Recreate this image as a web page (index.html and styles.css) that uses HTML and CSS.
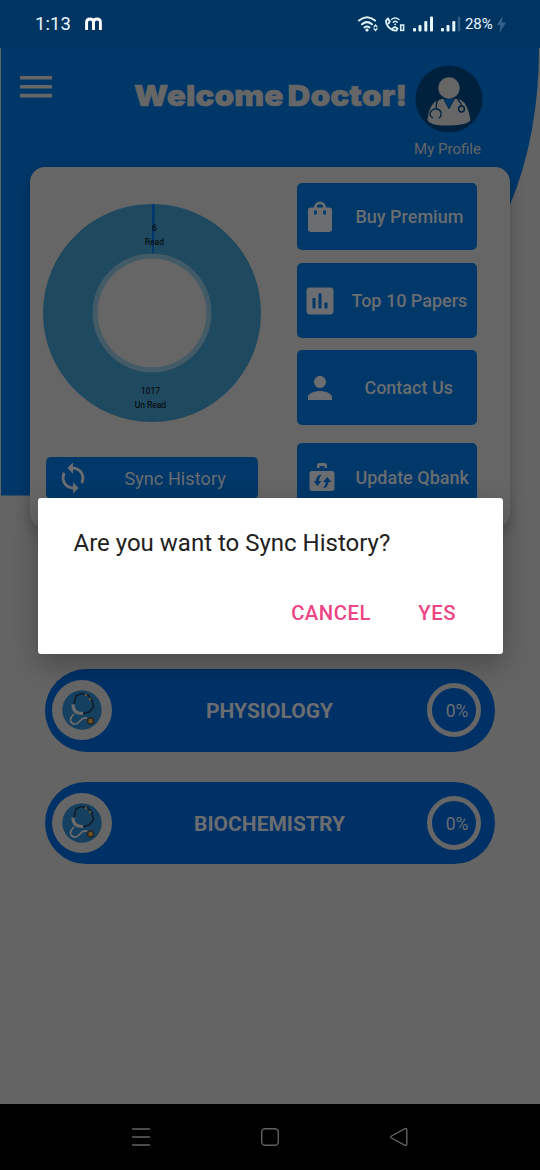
FILE: index.html
```html
<!DOCTYPE html>
<html lang="en">
<head>
<meta charset="utf-8">
<title>Welcome Doctor</title>
<link rel="stylesheet" href="styles.css">
</head>
<body>
<div class="screen">
  <svg class="backdrop" width="540" height="500" viewBox="0 0 540 500"><path d="M1 48H539Q539 135 510 205Q430 400 250 495.500H1Z"/></svg>

  <div class="status">
    <span class="time">1:13</span>
    <svg class="brand" width="17" height="14" viewBox="0 0 17 14"><path d="M1.600 13V5.500Q1.600 2 5 2T8.500 5.500V13M8.500 5.500Q8.500 2 12 2T15.400 5.500V13"/></svg>
    <svg class="signals" width="104" height="20" viewBox="357 14 104 20">
      <g fill="none" stroke="#e0f2fa" stroke-width="2" stroke-linecap="round">
        <path d="M359 20.500Q367 14 375 20.500M362 24.300Q367 20 372 24.300M364.500 27.500Q367 25.500 369.500 27.500"/>
        <path stroke-width="1.800" d="M388 18.500L386 20.500Q386 25 389.500 28T396.500 30.500L397.500 28.500L395 27L393 28M388 18.500L389.800 21.500L388.500 23.500"/>
        <path stroke-width="1.400" d="M391.500 19.500Q395 16.500 399 19.500M393.300 22.200Q395.200 20.500 397.200 22.200"/>
        <rect x="400.700" y="25" width="2.900" height="5.400" stroke-width="1.500"/>
        <path stroke-width="1.300" d="M374 26.800L375.500 25L377 26.800M374 28.800L375.500 30.500L377 28.800"/>
      </g>
      <g fill="#e9f7ff"><circle cx="367" cy="30" r="1.600"/><circle cx="395.200" cy="24.300" r=".9"/>
        <rect x="413" y="28" width="3" height="3.500" rx="1"/><rect x="418.500" y="25" width="3" height="6.500" rx="1"/><rect x="424.300" y="21" width="3" height="10.500" rx="1"/><rect x="430" y="16.500" width="3" height="15" rx="1"/>
        <rect x="441" y="28" width="3" height="3.500" rx="1"/><rect x="446.500" y="25" width="3" height="6.500" rx="1"/><rect x="452.300" y="21" width="3" height="10.500" rx="1"/><rect x="457.800" y="16.500" width="2.500" height="15" rx="1" opacity=".22"/></g>
    </svg>
    <span class="battery">28%</span>
    <svg class="bolt" width="9" height="17" viewBox="0 0 9 17"><path d="M5.500 0L0 9H3.500L2.500 17L9 6.500H5Z"/></svg>
  </div>

  <header class="header">
    <svg class="menu" width="32" height="22" viewBox="0 0 32 22"><path d="M0 1.800H32M0 10.700H32M0 19.600H32"/></svg>
    <h1 class="title">Welcome Doctor!</h1>
    <div class="profile">
      <svg width="68" height="68" viewBox="0 0 68 68">
        <circle cx="34" cy="34" r="33.500" fill="#00213e"/>
        <circle cx="34" cy="23" r="10.700" fill="#666"/>
        <path d="M23 35Q27 34 28 33.500L34 44.500L40 33.500Q42 34 46 35Q53 39 55.500 55Q53 60 34 60.500T12.500 55Q14 39 23 35Z" fill="#666"/>
        <path d="M29 34H39L34 43Z" fill="#003769"/>
        <path d="M23.500 34.500Q20.500 38 21.500 43.500M18 53Q13.500 51 15.500 47Q18 43 21.500 44Q27 45 26 50Q25.500 53 23.500 52.800M42.500 34.500Q46 37 46.500 41.500" fill="none" stroke="#00213e" stroke-width="1.300"/>
        <circle cx="46.500" cy="44" r="2.900" fill="none" stroke="#00213e" stroke-width="1.500"/>
      </svg>
      <span class="profile-name">My Profile</span>
    </div>
  </header>

  <section class="card">
    <div class="card-left">
      <div class="chart">
        <svg width="218" height="218" viewBox="-109 -109 218 218">
          <circle r="109" fill="#1f495f"/>
          <path d="M0 -59L0 -109H3L1.800 -59Z" fill="#003870"/>
          <circle r="59.500" fill="#435a67"/><circle r="54.500" fill="#666"/>
        </svg>
        <div class="slice slice-read">6<br>Read</div>
        <div class="slice slice-unread">1017<br>Un Read</div>
      </div>
      <div class="button sync">
        <svg width="34" height="34" viewBox="0 0 24 24"><path d="M12 4V1L8 5l4 4V6c3.310 0 6 2.690 6 6 0 1.010-.25 1.970-.7 2.800l1.460 1.460C19.540 15.030 20 13.570 20 12c0-4.420-3.580-8-8-8zm0 14c-3.310 0-6-2.690-6-6 0-1.010.25-1.970.7-2.800L5.240 7.740C4.460 8.970 4 10.430 4 12c0 4.420 3.580 8 8 8v3l4-4-4-4v3z"/></svg>
        <span>Sync History</span>
      </div>
    </div>
    <div class="card-right">
      <div class="button buy">
        <svg width="24" height="31" viewBox="0 0 24 31"><path fill-rule="evenodd" d="M6 6.500A6 6 0 0 1 18 6.500H21.500Q24 6.500 24 9V28Q24 31 21 31H3Q0 31 0 28V9Q0 6.500 2.500 6.500ZM8.800 6.500H15.200A3.200 3.200 0 0 0 8.800 6.500ZM6 9.500V13.500H8.800V9.500ZM15.200 9.500V13.500H18V9.500Z"/></svg>
        <span>Buy Premium</span>
      </div>
      <div class="button top">
        <svg width="36" height="36" viewBox="0 0 24 24"><path d="M19 3H5c-1.100 0-2 .9-2 2v14c0 1.100.9 2 2 2h14c1.100 0 2-.9 2-2V5c0-1.100-.9-2-2-2zM9 17H7v-7h2v7zm4 0h-2V7h2v10zm4 0h-2v-4h2v4z"/></svg>
        <span>Top 10 Papers</span>
      </div>
      <div class="button contact">
        <svg width="36" height="36" viewBox="0 0 24 24"><path d="M12 12c2.210 0 4-1.790 4-4s-1.790-4-4-4-4 1.790-4 4 1.790 4 4 4zm0 2c-2.670 0-8 1.340-8 4v2h16v-2c0-2.660-5.330-4-8-4z"/></svg>
        <span>Contact Us</span>
      </div>
      <div class="button update">
        <svg width="26" height="28" viewBox="0 0 26 28"><path d="M8 5V2.500Q8 0 10.500 0H15.500Q18 0 18 2.500V5H15.500V3H10.500V5ZM3 8H23Q25.500 8 25.500 10.500V25Q25.500 28 22.500 28H3Q.5 28 .5 25V10.500Q.5 8 3 8Z"/><path class="cut" d="M13 11.500Q7 12 7 18H4.500L8.500 23L12.500 18H10Q10 14 13 11.500ZM13.500 25.500Q19.500 24.500 19.500 19H22.500L18.200 14L14 19H16.500Q16.500 23 13.500 25.500Z"/></svg>
        <span>Update Qbank</span>
      </div>
    </div>
  </section>

  <main class="subjects">
    <div class="subject">
      <div class="subject-icon"><svg width="40" height="40" viewBox="0 0 40 40"><use href="#stethoscope"/></svg></div>
      <span class="subject-name">PHYSIOLOGY</span>
      <span class="percent">0%</span>
    </div>
    <div class="subject">
      <div class="subject-icon"><svg width="40" height="40" viewBox="0 0 40 40"><g id="stethoscope">
        <circle cx="20" cy="20" r="19.700" fill="#16405f"/>
        <path d="M12 14L14 6L19 3.500L26 5L30 10L31.500 17L27 22L20 24" fill="none" stroke="#101c2b" stroke-width="1.600"/>
        <path d="M11 14.500Q11 24 21 23.500" fill="none" stroke="#6b6b6b" stroke-width="3.200"/>
        <path d="M12 24Q6 30 10 33T18 31T26 29" fill="none" stroke="#6b6b6b" stroke-width="1.700"/>
        <circle cx="28.500" cy="31" r="4" fill="#242a2c"/><circle cx="28.500" cy="31" r="2.200" fill="#76511d"/>
        <circle cx="24" cy="5" r="1.200" fill="#69552c"/><circle cx="28" cy="9" r="1.200" fill="#69552c"/>
      </g></svg></div>
      <span class="subject-name">BIOCHEMISTRY</span>
      <span class="percent">0%</span>
    </div>
  </main>

  <nav class="nav">
    <svg width="18" height="18" viewBox="0 0 18 18"><path d="M0 1H18M0 9H18M0 17H18"/></svg>
    <svg width="18" height="18" viewBox="0 0 18 18"><rect x=".7" y=".7" width="16.600" height="16.600" rx="3.500"/></svg>
    <svg width="18" height="18" viewBox="0 0 18 18"><path d="M1.500 8L14.500 .9Q16.800 0 16.800 2V16Q16.800 18 14.500 17L1.500 10Q0 9 1.500 8Z"/></svg>
  </nav>

  <div class="dialog">
    <p class="message">Are you want to Sync History?</p>
    <div class="actions"><span class="cancel">CANCEL</span><span class="yes">YES</span></div>
  </div>
</div>
</body>
</html>
```
FILE: styles.css
```css
* { box-sizing: border-box; }
body { margin: 0; font-family: Roboto, sans-serif; }
.screen { position: relative; width: 540px; height: 1170px; background: #646464; overflow: hidden; display: flex; flex-direction: column; }
.backdrop { position: absolute; left: 0; top: 0; fill: #003769; }
.status { position: relative; height: 48px; flex: none; background: #003562; color: #eaf6ff; display: flex; align-items: center; padding-left: 35px; }
.time { font-size: 18.5px; width: 50px; letter-spacing: .1px; white-space: nowrap; }
.brand { fill: none; stroke: #fff; stroke-width: 2.9; }
.signals { margin-left: 255px; }
.battery { margin-left: 4px; width: 31px; font-size: 15px; letter-spacing: -.1px; }
.bolt { fill: #36618a; margin-left: 1px; }
.header { position: relative; height: 118.5px; flex: none; display: flex; align-items: flex-start; color: #666; padding-left: 20px; }
.menu { margin-top: 28px; stroke: #666; stroke-width: 3.6; }
.title { font: 900 29px/34px Inter, sans-serif; margin: 31px 0 0 82px; width: 273px; white-space: nowrap; word-spacing: -2px; -webkit-text-stroke: .6px #666; transform: scaleX(1.093); transform-origin: left; }
.profile { margin-left: 2px; margin-top: 17px; width: 80px; display: flex; flex-direction: column; align-items: center; }
.profile-name { font-size: 15px; line-height: 18px; margin-top: 7px; margin-right: 3px; white-space: nowrap; }
.card { position: relative; margin: 0 30px; height: 361.5px; flex: none; background: #666; border-radius: 15px; display: flex; box-shadow: 0 5px 14px rgba(0,0,0,.25); }
.card-left { width: 267.4px; padding-left: 13.4px; padding-top: 37.4px; }
.chart { position: relative; width: 218px; height: 218px; }
.slice { position: absolute; font-size: 8.5px; line-height: 14px; color: #000; text-align: center; width: 60px; }
.slice-read { left: 81px; top: 17.500px; }
.slice-unread { left: 77px; top: 180.500px; }
.button { background: #003869; border-radius: 5px; color: #6b6d70; fill: #6b6d70; display: flex; align-items: center; font-size: 18px; font-weight: 500; white-space: nowrap; }
.cut { fill: #003869; }
.sync { width: 212px; height: 42px; margin: 35.6px 0 0 3px; padding-left: 10px; font-weight: 400; gap: 34px; letter-spacing: .1px; }
.card-right { width: 180px; padding-top: 16.5px; }
.buy { height: 67px; padding-left: 11px; gap: 23px; }
.top { height: 75px; margin-top: 13px; padding-left: 5px; gap: 13px; }
.contact { height: 75px; margin-top: 12px; padding-left: 5px; gap: 26px; }
.update { height: 68px; margin-top: 18px; padding-left: 12px; gap: 20px; }
.subjects { padding: 141px 45px 0; display: flex; flex-direction: column; gap: 30px; }
.subject { height: 82.5px; border-radius: 42px; background: #003166; color: #6b6d70; display: grid; grid-template-columns: 60px 1fr 54px; align-items: center; padding: 0 14px 0 7px; }
.subject-icon { width: 60px; height: 60px; border-radius: 50%; background: #666; display: flex; align-items: center; justify-content: center; }
.subject-name { font-size: 21px; font-weight: 700; text-align: center; padding-top: 2px; }
.percent { width: 54px; height: 54px; border: 5px solid #666; border-radius: 50%; display: flex; align-items: center; justify-content: center; font-size: 17.5px; padding: 2px 0 0 6px; }
.nav { position: relative; margin-top: auto; flex: none; height: 66px; background: #000; display: flex; justify-content: center; align-items: center; gap: 111px; fill: none; stroke: #626262; stroke-width: 1.4; }
.dialog { position: absolute; left: 37.5px; top: 498px; width: 465px; height: 156px; background: #fff; border-radius: 3px; box-shadow: 0 10px 28px rgba(0,0,0,.28); padding: 29.5px 46.5px 0 36px; }
.message { margin: 0; font-size: 24px; line-height: 30px; color: #212121; white-space: nowrap; }
.actions { display: flex; justify-content: flex-end; gap: 47.500px; margin-top: 42.500px; color: #ed4585; font-size: 20.300px; line-height: 26px; font-weight: 500; letter-spacing: .5px; }
```
